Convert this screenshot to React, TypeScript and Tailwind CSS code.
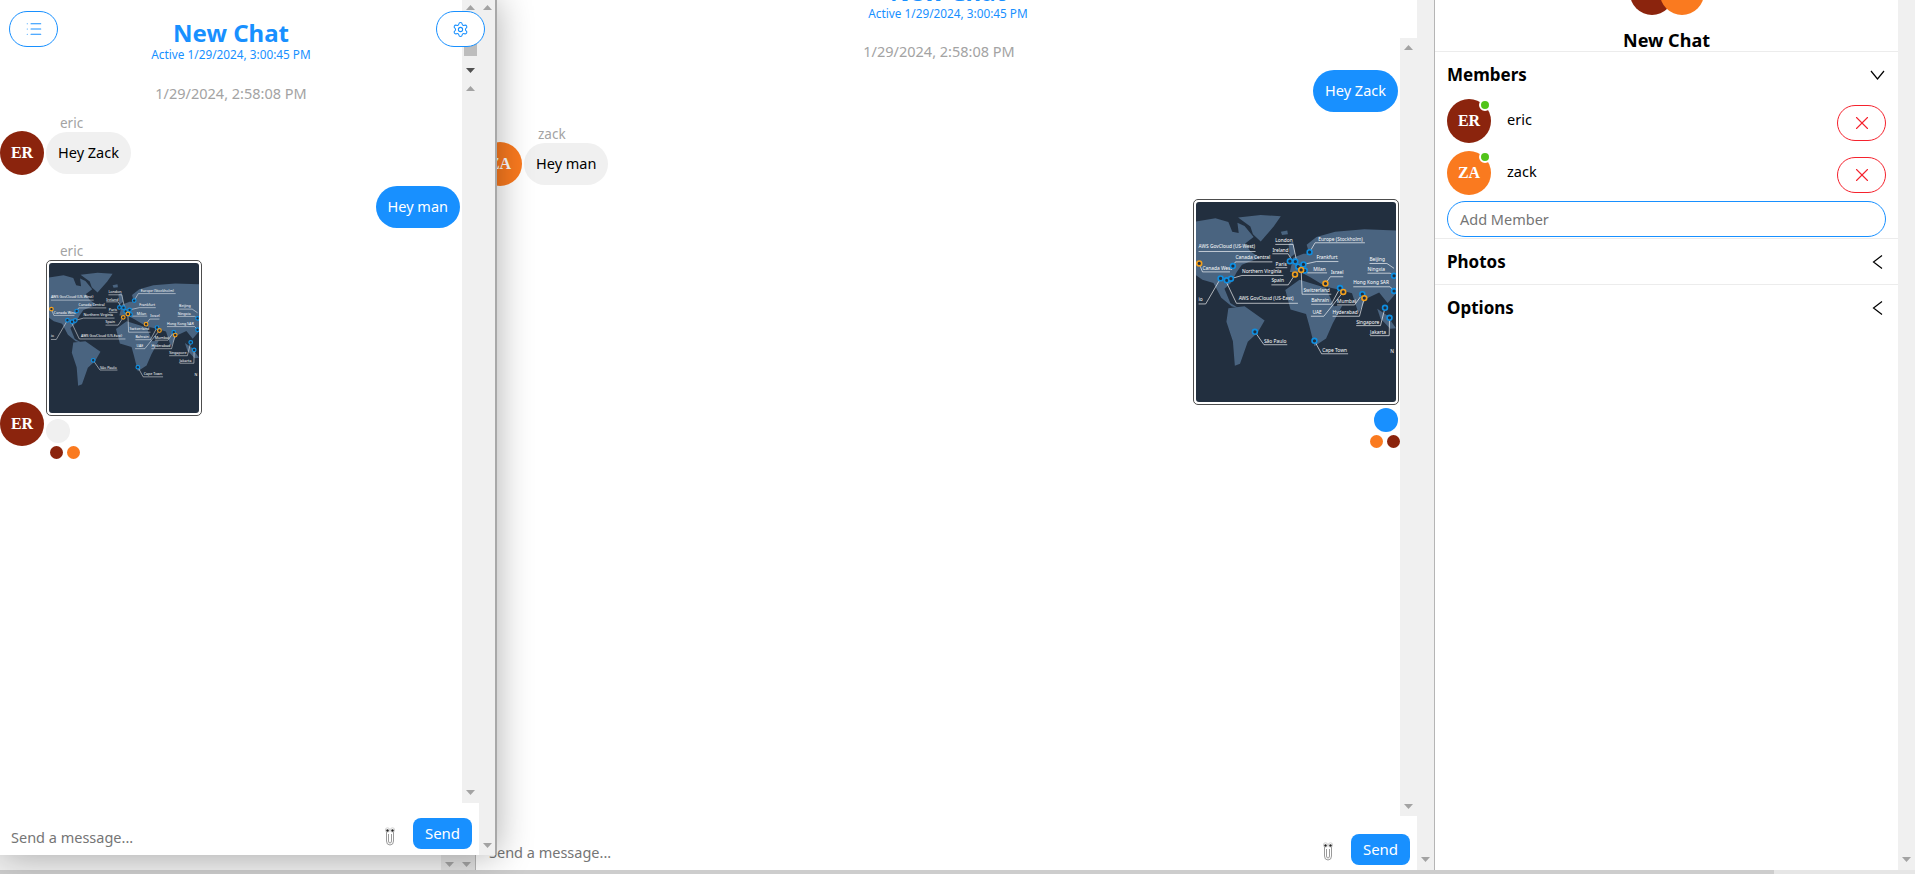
import { Settings, List, X } from "lucide-react";

const ER = "bg-[#8b240d]";
const ZA = "bg-[#fa7a1f]";

function Arrow({ up, dark }: { up?: boolean; dark?: boolean }) {
  return (
    <svg width="9" height="5" viewBox="0 0 9 5" className="block">
      <path d={up ? "M4.5 0 L9 5 L0 5 Z" : "M0 0 L9 0 L4.5 5 Z"} fill={dark ? "#505050" : "#a3a3a3"} />
    </svg>
  );
}

function Avatar({ text, color }: { text: string; color: string }) {
  return (
    <div className={`w-[44px] h-[44px] shrink-0 rounded-full flex items-center justify-center text-white font-bold text-[16px] font-['Liberation_Serif',serif] ${color}`}>
      {text}
    </div>
  );
}

function Dot({ color }: { color: string }) {
  return <div className={`w-[13px] h-[13px] rounded-full ${color}`} />;
}

function InBubble({ text }: { text: string }) {
  return <div className="h-[42px] px-3 flex items-center rounded-[21px] bg-[#f0f0f0] text-black text-[14.5px]">{text}</div>;
}

function OutBubble({ text }: { text: string }) {
  return <div className="h-[42px] px-3 flex items-center rounded-[21px] bg-[#1890ff] text-white text-[14.5px]">{text}</div>;
}

function Clippy() {
  return (
    <svg width="12" height="20" viewBox="0 0 12 20" className="shrink-0">
      <path d="M2.5 6 L2.5 15 Q2.5 19 6 19 Q9.5 19 9.5 15 L9.5 5 M4.5 8 L4.5 15 Q4.5 17 6 17 Q7.5 17 7.5 15 L7.5 8" fill="none" stroke="#9a9a9a" strokeWidth="1" />
      <circle cx="3.5" cy="4" r="2.2" fill="#fff" stroke="#b5b5b5" strokeWidth="0.6" />
      <circle cx="8.5" cy="4" r="2.2" fill="#fff" stroke="#b5b5b5" strokeWidth="0.6" />
      <circle cx="3.5" cy="4.5" r="1.2" fill="#222" />
      <circle cx="8.5" cy="4.5" r="1.2" fill="#222" />
    </svg>
  );
}

function Footer({ box, textTop, btnTop }: { box: string; textTop: string; btnTop: string }) {
  return (
    <div className={`shrink-0 flex items-start bg-white ${box}`}>
      <div className={`flex-1 text-[14.5px] leading-[22px] text-[#757575] ${textTop}`}>Send a message...</div>
      <div className={`mr-[17px] ${textTop}`}><Clippy /></div>
      <button className={`w-[59px] h-[31px] rounded-[8px] bg-[#1890ff] text-white text-[15px] ${btnTop}`}>Send</button>
    </div>
  );
}

const blueDots = [[76, 236], [95, 242], [108, 237], [114, 198], [182, 401], [290, 183], [307, 184], [316, 200], [332, 193], [336, 212], [351, 155], [366, 429], [445, 266], [514, 285], [584, 327], [598, 358], [612, 228], [612, 275]];
const orangeDots = [[10, 190], [306, 224], [325, 210], [400, 252], [455, 278], [520, 297]];
const labels: [string, number, number][] = [
  ["Europe (Stockholm)", 378, 119], ["London", 245, 125], ["Ireland", 236, 155], ["Paris", 246, 197], ["Spain", 233, 248],
  ["Frankfurt", 372, 177], ["Milan", 362, 214], ["Israel", 417, 224], ["Switzerland", 332, 278], ["Bahrain", 356, 309],
  ["UAE", 360, 347], ["Mumbai", 436, 312], ["Hyderabad", 422, 347], ["Hong Kong SAR", 486, 254], ["Beijing", 536, 183],
  ["Ningxia", 530, 214], ["Singapore", 495, 377], ["Jakarta", 538, 408], ["N", 600, 466], ["Cape Town", 390, 462],
  ["São Paulo", 210, 435], ["AWS GovCloud (US-West)", 8, 143], ["AWS GovCloud (US-East)", 132, 303], ["Canada Central", 122, 177],
  ["Canada West", 20, 209], ["Northern Virginia", 142, 219], ["io", 8, 307],
];
const leaders = [
  "M351 155 L368 126 L522 126", "M245 131 L300 131 L310 178", "M236 160 L285 160 L295 178", "M246 203 L282 203", "M233 256 L285 256 L306 224",
  "M332 193 L372 184 L440 184", "M336 212 L345 219 L405 219", "M415 231 L455 231 M400 252 L415 231", "M325 210 L328 285 L418 285", "M356 316 L418 316 L445 266",
  "M355 353 L395 353 L455 278", "M436 318 L490 318 L514 285", "M422 353 L505 353 L520 297", "M486 262 L600 262 L612 275", "M536 190 L590 190 L612 205",
  "M530 220 L600 220 L612 228", "M495 382 L570 382 L584 327", "M538 413 L597 413 L598 358", "M366 429 L388 469 L470 469", "M182 401 L210 441 L282 441",
  "M8 153 L184 153", "M95 250 L125 313 L315 313", "M114 198 L122 185 L236 185", "M20 216 L105 216 M10 190 L20 216", "M108 237 L142 227 L270 227", "M8 315 L30 315 L76 236",
];

function WorldMap() {
  return (
    <svg viewBox="0 0 618 618" className="block w-full h-full rounded-[3px]">
      <rect width="618" height="618" fill="#222f3f" />
      <g fill="#4a6480">
        <path d="M0 60 L60 50 L100 62 L112 92 L132 96 L128 64 L150 74 L178 108 L152 128 L168 152 L196 172 L142 194 L126 216 L108 250 L88 268 L106 312 L132 328 L110 322 L78 296 L54 250 L20 240 L0 226 Z" />
        <path d="M130 48 L200 40 L262 44 L240 76 L200 122 L176 100 L168 76 Z" />
        <path d="M100 328 L150 322 L212 366 L190 404 L160 432 L136 500 L120 506 L114 430 L94 370 Z" />
        <path d="M342 132 L372 108 L430 92 L520 84 L618 88 L618 282 L592 312 L566 280 L524 300 L502 344 L482 282 L440 270 L402 262 L352 232 L322 216 L290 216 L300 172 L332 160 L350 160 Z" />
        <path d="M276 272 L320 240 L402 266 L426 322 L452 320 L422 376 L402 422 L366 446 L350 382 L340 346 L292 332 Z" />
        <path d="M286 130 L300 122 L306 160 L290 172 Z" />
        <path d="M262 92 L282 88 L284 100 L266 102 Z" />
        <path d="M560 330 L590 350 L618 390 L600 392 L570 360 Z" />
      </g>
      <g fill="none" stroke="#fff" strokeWidth="2">
        {leaders.map((d) => <path key={d} d={d} />)}
      </g>
      <g fill="#fff" fontSize="15" fontFamily="'Noto Sans', sans-serif">
        {labels.map(([t, x, y]) => <text key={t} x={x} y={y}>{t}</text>)}
      </g>
      <g fill="#222f3f" strokeWidth="5">
        {blueDots.map(([x, y]) => <circle key={`${x}-${y}`} cx={x} cy={y} r="7.5" stroke="#0f8ee0" />)}
        {orangeDots.map(([x, y]) => <circle key={`${x}-${y}`} cx={x} cy={y} r="7.5" stroke="#f2a01e" />)}
      </g>
    </svg>
  );
}

function MapCard({ size }: { size: string }) {
  return (
    <div className={`shrink-0 p-[2px] bg-white border border-[#4d4d4d] rounded-[5px] ${size}`}>
      <WorldMap />
    </div>
  );
}

function ChatHead({ box }: { box: string }) {
  return (
    <div className={`h-[67px] shrink-0 pt-[21px] text-center text-[#1890ff] ${box}`}>
      <div className="text-[24px] leading-[24px] font-bold">New Chat</div>
      <div className="mt-[2px] text-[11.8px] leading-[14px]">Active 1/29/2024, 3:00:45 PM</div>
    </div>
  );
}

function PopupChat() {
  return (
    <div className="absolute left-0 top-0 w-[497px] h-[855px] flex bg-white border-r-2 border-[#a8a8a8] rounded-bl-lg shadow-[0_0_36px_rgba(0,0,0,0.32)]">
      <div className="w-[479px] flex flex-col">
        <div className="flex-1 min-h-0 flex">
          <div className="w-[462px] flex flex-col">
            <ChatHead box="" />
            <div className="mt-[16px] text-center text-[14.5px] leading-[20px] text-[#a3a3a3]">1/29/2024, 2:58:08 PM</div>
            <div className="mt-[12px] ml-[60px] text-[13.5px] leading-[16px] text-[#a3a3a3]">eric</div>
            <div className="flex items-center gap-[2px]">
              <Avatar text="ER" color={ER} />
              <InBubble text="Hey Zack" />
            </div>
            <div className="mt-[11px] pr-[2px] flex justify-end"><OutBubble text="Hey man" /></div>
            <div className="mt-[15px] ml-[60px] text-[13.5px] leading-[16px] text-[#a3a3a3]">eric</div>
            <div className="ml-[46px] mt-[1px]"><MapCard size="w-[156px] h-[156px]" /></div>
            <div className="-mt-[14px] flex items-start gap-[2px]">
              <Avatar text="ER" color={ER} />
              <div className="mt-[17px] w-[24px] h-[24px] rounded-full bg-[#f0f0f0]" />
            </div>
            <div className="ml-[50px] flex gap-[4px]">
              <Dot color={ER} />
              <Dot color={ZA} />
            </div>
          </div>
          <div className="w-[17px] bg-[#f0f0f0] flex flex-col items-center">
            <div className="mt-[5px]"><Arrow up /></div>
            <div className="mt-[4px] w-[13px] h-[42px] bg-[#bdbdbd]" />
            <div className="mt-[12px]"><Arrow dark /></div>
            <div className="mt-[13px]"><Arrow up /></div>
            <div className="mt-auto mb-[8px]"><Arrow /></div>
          </div>
        </div>
        <Footer box="h-[52px] pl-[11px] pr-[7px]" textTop="mt-[23px]" btnTop="mt-[15px]" />
      </div>
      <div className="w-[16px] bg-[#f0f0f0] flex flex-col items-center justify-between pt-[5px] pb-[7px]">
        <Arrow up />
        <Arrow />
      </div>
      <button className="absolute left-[9px] top-[11px] w-[49px] h-[36px] rounded-[18px] border border-[#1890ff] bg-white flex items-center justify-center text-[#1890ff]">
        <List size={18} strokeWidth={1.4} />
      </button>
      <button className="absolute left-[436px] top-[11px] w-[49px] h-[36px] rounded-[18px] border border-[#1890ff] bg-white flex items-center justify-center text-[#1890ff]">
        <Settings size={17} strokeWidth={1.5} />
      </button>
    </div>
  );
}

function MainChat() {
  return (
    <div className="flex-1 min-w-0 flex border-r border-[#b5b5b5]">
      <div className="flex-1 min-w-0 flex flex-col">
        <div className="flex-1 min-h-0 flex">
          <div className="flex-1 min-w-0 flex flex-col overflow-hidden pl-[2px]">
            <ChatHead box="-mt-[41px] pl-[18px]" />
            <div className="mt-[15px] text-center text-[14.5px] leading-[20px] text-[#a3a3a3]">1/29/2024, 2:58:08 PM</div>
            <div className="mt-[9px] mr-[2px] flex justify-end"><OutBubble text="Hey Zack" /></div>
            <div className="mt-[14px] ml-[60px] text-[13.5px] leading-[16px] text-[#a3a3a3]">zack</div>
            <div className="flex items-center gap-[2px]">
              <Avatar text="ZA" color={ZA} />
              <InBubble text="Hey man" />
            </div>
            <div className="mt-[13px] mr-[1px] flex justify-end"><MapCard size="w-[206px] h-[206px]" /></div>
            <div className="mt-[3px] mr-[2px] flex justify-end"><div className="w-[24px] h-[24px] rounded-full bg-[#1890ff]" /></div>
            <div className="mt-[3px] flex justify-end gap-[4px]">
              <Dot color={ZA} />
              <Dot color={ER} />
            </div>
          </div>
          <div className="mt-[38px] w-[17px] bg-[#f0f0f0] flex flex-col items-center justify-between pt-[7px] pb-[7px]">
            <Arrow up />
            <Arrow />
          </div>
        </div>
        <Footer box="h-[54px] pl-[13px] pr-[7px]" textTop="mt-[25px]" btnTop="mt-[18px]" />
      </div>
      <div className="w-[17px] bg-[#f0f0f0] flex flex-col items-center justify-end pb-[8px]"><Arrow /></div>
    </div>
  );
}

function Chevron({ open }: { open?: boolean }) {
  return open ? (
    <svg width="15" height="10" viewBox="0 0 15 10" fill="none" stroke="#000" strokeWidth="1.2">
      <path d="M1 1 L7.5 9 L14 1" />
    </svg>
  ) : (
    <svg width="15" height="14" viewBox="0 0 15 14" fill="none" stroke="#000" strokeWidth="1.2">
      <path d="M12 0.5 L3.5 7 L12 13.5" />
    </svg>
  );
}

function SectionHead({ title, open }: { title: string; open?: boolean }) {
  return (
    <div className="flex items-center justify-between h-[20px] pl-[12px] pr-[13px]">
      <span className="text-[17px] font-bold text-black">{title}</span>
      <Chevron open={open} />
    </div>
  );
}

function Member({ name, initials, color }: { name: string; initials: string; color: string }) {
  return (
    <div className="flex items-start h-[44px] pl-[12px] pr-[12px]">
      <div className="relative">
        <Avatar text={initials} color={color} />
        <div className="absolute right-[0px] top-[0px] w-[12px] h-[12px] rounded-full bg-[#52c41a] border-2 border-white" />
      </div>
      <div className="ml-[16px] flex-1 mt-[9px] text-[14.5px] leading-[22px] text-black">{name}</div>
      <button className="mt-[6px] w-[49px] h-[36px] rounded-[18px] border border-[#f5222d] bg-white flex items-center justify-center text-[#f5222d]">
        <X size={22} strokeWidth={1.2} />
      </button>
    </div>
  );
}

function Details() {
  return (
    <div className="w-[480px] shrink-0 flex">
      <div className="flex-1 flex flex-col bg-white">
        <div className="h-[52px] shrink-0 relative border-b border-[#ececec] overflow-hidden text-center">
          <div className="absolute left-[195px] -top-[29px] w-[44px] h-[44px] rounded-full bg-[#8b240d]" />
          <div className="absolute left-[225px] -top-[29px] w-[44px] h-[44px] rounded-full bg-[#fa7a1f]" />
          <div className="pt-[30px] text-[18px] leading-[20px] font-bold text-black">New Chat</div>
        </div>
        <div className="mt-[13px]"><SectionHead title="Members" open /></div>
        <div className="mt-[14px] flex flex-col gap-[8px]">
          <Member name="eric" initials="ER" color={ER} />
          <Member name="zack" initials="ZA" color={ZA} />
        </div>
        <div className="px-[12px] mt-[6px]">
          <div className="h-[36px] rounded-[18px] border border-[#1890ff] pl-[12px] pt-[2px] flex items-center text-[14.5px] text-[#757575]">Add Member</div>
        </div>
        <div className="border-t border-[#ececec] mt-[1px] pt-[13px] pb-[12px]"><SectionHead title="Photos" /></div>
        <div className="border-t border-[#ececec] pt-[13px]"><SectionHead title="Options" /></div>
      </div>
      <div className="w-[17px] bg-[#f0f0f0] flex flex-col items-center justify-end pb-[8px]"><Arrow /></div>
    </div>
  );
}

export default function App() {
  return (
    <div className="relative h-[874px] w-full overflow-hidden bg-white flex flex-col font-['Noto_Sans',sans-serif]">
      <div className="flex-1 min-h-0 flex">
        <div className="w-[476px] shrink-0 flex flex-col justify-end bg-[#f0f0f0] border-r border-[#b5b5b5]">
          <div className="flex justify-end">
            <div className="w-[34px] h-[15px] bg-[#e0e0e0] flex items-center justify-around pt-[4px]">
              <Arrow />
              <Arrow />
            </div>
          </div>
        </div>
        <MainChat />
        <Details />
      </div>
      <div className="h-[4px] shrink-0 bg-[#e6e6e6]"><div className="h-full w-[1774px] bg-[#cdcdcd]" /></div>
      <PopupChat />
    </div>
  );
}
